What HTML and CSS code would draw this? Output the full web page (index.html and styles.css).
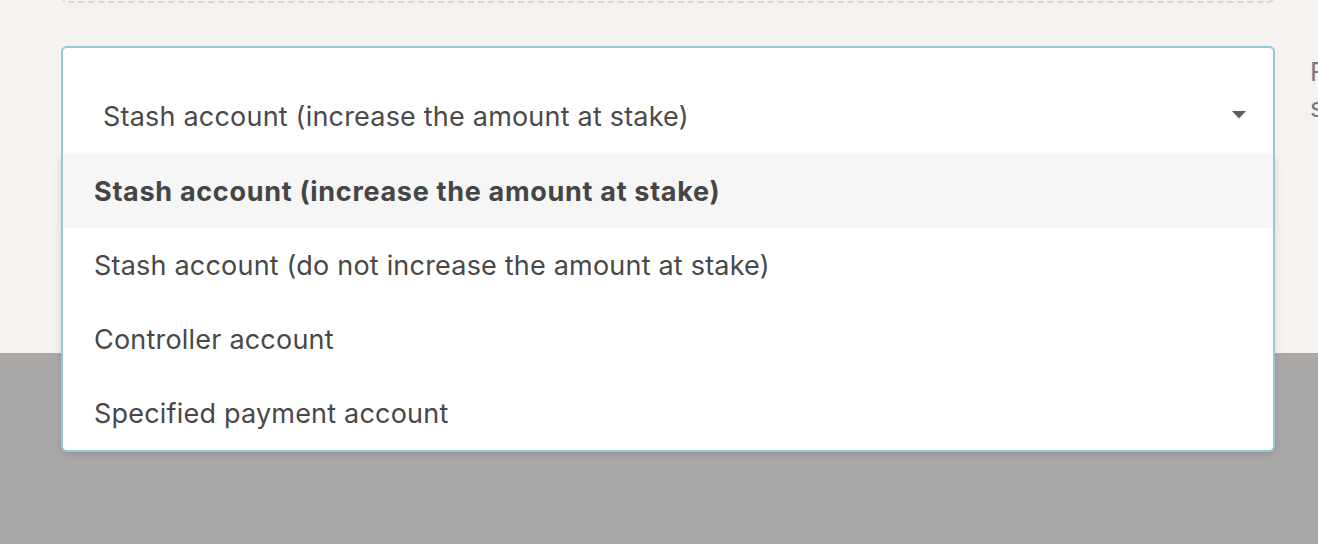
FILE: index.html
```html
<!DOCTYPE html>
<html lang="en">
<head>
<meta charset="utf-8">
<title>Payment destination</title>
<link rel="stylesheet" href="styles.css">
</head>
<body>
<div class="page">
  <section class="card">
    <div class="dashed"></div>
    <div class="row">
      <div class="select">
        <div class="value">Stash account (increase the amount at stake)</div>
        <svg class="caret" width="14" height="8" viewBox="0 0 14 8"><path d="M0 0H14L7 7.5Z" fill="#5c5c5c"/></svg>
        <ul class="menu">
          <li class="item selected">Stash account (increase the amount at stake)</li>
          <li class="item">Stash account (do not increase the amount at stake)</li>
          <li class="item">Controller account</li>
          <li class="item">Specified payment account</li>
        </ul>
      </div>
      <div class="help">
        <div class="help-line">Funds will be added to the</div>
        <div class="help-line">stash and bonded</div>
      </div>
    </div>
  </section>
  <footer class="backdrop"></footer>
</div>
</body>
</html>
```

FILE: styles.css
```css
html, body {
  margin: 0;
  padding: 0;
}
body {
  width: 1318px;
  height: 544px;
  overflow: hidden;
  font-family: Inter, "Noto Sans", sans-serif;
  background: #aaa9a8;
}
.page {
  display: flex;
  flex-direction: column;
  height: 544px;
}
.card {
  background: #f5f2ef;
  height: 353px;
  padding-left: 61px;
  box-sizing: border-box;
  position: relative;
  z-index: 2;
}
.dashed {
  width: 1214px;
  height: 40px;
  margin-top: -37px;
  box-sizing: border-box;
  border: 2px dashed #d8d4d1;
  border-radius: 7px;
}
.row {
  display: flex;
  gap: 35px;
  margin-top: 43px;
}
.select {
  position: relative;
  width: 1214px;
  flex-shrink: 0;
  height: 109px;
  box-sizing: border-box;
  background: #fff;
  border: 2px solid #96c8da;
  border-bottom: none;
  border-radius: 6px 6px 0 0;
}
.value {
  padding: 54px 0 0 40px;
  font-size: 27px;
  line-height: 30px;
  letter-spacing: 0.2px;
  color: #4a4a4a;
}
.caret {
  position: absolute;
  right: 27px;
  top: 63px;
}
.menu {
  position: absolute;
  top: 107px;
  left: -2px;
  right: -2px;
  margin: 0;
  padding: 0;
  list-style: none;
  background: #fff;
  border: 2px solid #96c8da;
  border-top: none;
  border-radius: 0 0 6px 6px;
  box-shadow: 0 3px 8px rgba(0, 0, 0, 0.12);
}
.item {
  height: 74px;
  display: flex;
  align-items: center;
  padding-left: 31px;
  font-size: 27px;
  letter-spacing: 0.2px;
  color: #484848;
}
.item.selected {
  height: 73px;
  background: #f6f6f6;
  font-weight: 700;
  letter-spacing: 0.7px;
  color: #454545;
}
.help {
  flex-shrink: 0;
  width: 400px;
  padding-top: 8px;
  font-size: 26px;
  line-height: 36px;
  color: #7a7a7a;
}
.backdrop {
  flex: 1;
  background: #aaa9a8;
}
```
